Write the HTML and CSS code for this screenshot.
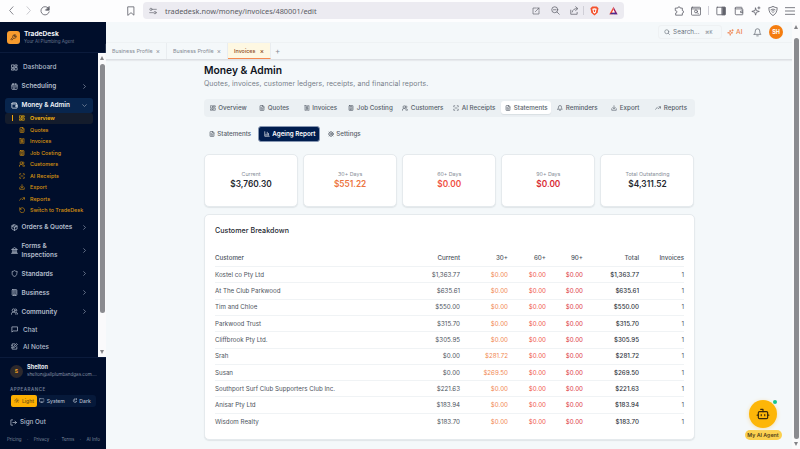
FILE: index.html
```html
<!DOCTYPE html>
<html lang="en">
<head>
<meta charset="utf-8">
<title>TradeDesk</title>
<link rel="stylesheet" href="styles.css">
</head>
<body>
<svg class="defs" aria-hidden="true">
  <symbol id="grid" viewBox="0 0 24 24"><rect x="3" y="3" width="7" height="9"/><rect x="14" y="3" width="7" height="5"/><rect x="14" y="12" width="7" height="9"/><rect x="3" y="16" width="7" height="5"/></symbol>
  <symbol id="cal" viewBox="0 0 24 24"><rect x="3" y="4" width="18" height="18" rx="2"/><path d="M8 2v4M16 2v4M3 10h18M8 14h1M12 14h1M16 14h1M8 18h1M12 18h1"/></symbol>
  <symbol id="wallet" viewBox="0 0 24 24"><path d="M19 7V4a1 1 0 0 0-1-1H5a2 2 0 0 0 0 4h15a1 1 0 0 1 1 1v12a1 1 0 0 1-1 1H5a2 2 0 0 1-2-2V5M21 12h-5v4h5"/></symbol>
  <symbol id="file" viewBox="0 0 24 24"><path d="M14 2H6a2 2 0 0 0-2 2v16a2 2 0 0 0 2 2h12a2 2 0 0 0 2-2V8zM14 2v6h6M8 13h8M8 17h8M8 9h2"/></symbol>
  <symbol id="receipt" viewBox="0 0 24 24"><path d="M4 2v20l2-1 2 1 2-1 2 1 2-1 2 1 2-1 2 1V2l-2 1-2-1-2 1-2-1-2 1-2-1-2 1zM15 8h-5a2 2 0 0 0 0 4h4a2 2 0 0 1 0 4H8M12 6v12"/></symbol>
  <symbol id="calc" viewBox="0 0 24 24"><rect x="4" y="2" width="16" height="20" rx="2"/><path d="M8 6h8M8 11h1M12 11h1M16 11h1M8 15h1M12 15h1M16 15v3M8 18h4"/></symbol>
  <symbol id="users" viewBox="0 0 24 24"><circle cx="9" cy="8" r="5"/><path d="M1 22v-2a7 7 0 0 1 7-6h2a7 7 0 0 1 7 6v2M16 3a5 5 0 0 1 1 9.500M19 15a6 6 0 0 1 4 6"/></symbol>
  <symbol id="scan" viewBox="0 0 24 24"><path d="M3 7V3h4M17 3h4v4M21 17v4h-4M7 21H3v-4M8 12h8"/></symbol>
  <symbol id="down" viewBox="0 0 24 24"><path d="M12 3v12M7 10l5 5 5-5M3 15v6h18v-6"/></symbol>
  <symbol id="trend" viewBox="0 0 24 24"><path d="M2 17l7-7 5 5 8-8M16 7h6v6"/></symbol>
  <symbol id="undo" viewBox="0 0 24 24"><path d="M3 3v6h6M3 9a10 10 0 1 1-.5 6"/></symbol>
  <symbol id="box" viewBox="0 0 24 24"><path d="M12 2l9 5v10l-9 5-9-5V7zM3 7l9 5 9-5M12 12v10M7.500 4.500l9 5"/></symbol>
  <symbol id="bank" viewBox="0 0 24 24"><path d="M2 22h20M4 18h16M6 18v-8M10 18v-8M14 18v-8M18 18v-8M3 8l9-6 9 6z"/></symbol>
  <symbol id="shield" viewBox="0 0 24 24"><path d="M20 13c0 5-3.500 7.500-8 9-4.500-1.500-8-4-8-9V5c3 0 5.500-1 8-3 2.500 2 5 3 8 3z"/></symbol>
  <symbol id="building" viewBox="0 0 24 24"><rect x="4" y="2" width="16" height="20" rx="2"/><path d="M9 22v-4h6v4M8 6h1M12 6h1M16 6h1M8 10h1M12 10h1M16 10h1M8 14h1M12 14h1M16 14h1"/></symbol>
  <symbol id="chat" viewBox="0 0 24 24"><path d="M21 3H3v18l4-4h14z"/></symbol>
  <symbol id="note" viewBox="0 0 24 24"><path d="M13 3H4v18h16v-8M9 15l1-5 9-8 3 3-9 9zM4 8H2M4 16H2"/></symbol>
  <symbol id="chev" viewBox="0 0 24 24"><path d="M8 3l9 9-9 9"/></symbol>
  <symbol id="chevd" viewBox="0 0 24 24"><path d="M3 8l9 9 9-9"/></symbol>
  <symbol id="bell" viewBox="0 0 24 24"><path d="M3 17h18c-2-2-3-4-3-9a6 6 0 0 0-12 0c0 5-1 7-3 9M10 21h4"/></symbol>
  <symbol id="bars" viewBox="0 0 24 24"><path d="M3 3v18h18M8 17v-4M13 17V5M18 17V10"/></symbol>
  <symbol id="gear" viewBox="0 0 24 24"><circle cx="12" cy="12" r="8.500"/><circle cx="12" cy="12" r="3"/><path d="M12 1v3M12 20v3M1 12h3M20 12h3M4 4l2 2M18 18l2 2M20 4l-2 2M6 18l-2 2"/></symbol>
  <symbol id="sun" viewBox="0 0 24 24"><circle cx="12" cy="12" r="4"/><path d="M12 2v2M12 20v2M2 12h2M20 12h2M5 5l1.500 1.500M17.500 17.500L19 19M19 5l-1.500 1.500M6.500 17.500L5 19"/></symbol>
  <symbol id="monitor" viewBox="0 0 24 24"><rect x="2" y="3" width="20" height="14" rx="2"/><path d="M8 21h8M12 17v4"/></symbol>
  <symbol id="moon" viewBox="0 0 24 24"><path d="M11 4a8 8 0 1 0 10 10 7 7 0 0 1-10-10M19 2v6M16 5h6"/></symbol>
  <symbol id="out" viewBox="0 0 24 24"><path d="M9 3H3v18h6M10 12h12M17 7l5 5-5 5"/></symbol>
  <symbol id="search" viewBox="0 0 24 24"><circle cx="11" cy="11" r="8"/><path d="M17 17l5 5"/></symbol>
  <symbol id="zoomout" viewBox="0 0 24 24"><circle cx="10" cy="10" r="8"/><path d="M16 16l6 6M6.500 10h7"/></symbol>
  <symbol id="spark" viewBox="0 0 24 24"><path d="M11 5l2 6 7 2-7 2-2 7-2-7-7-2 7-2zM19 2v5M16.500 4.500h5"/></symbol>
  <symbol id="wrench" viewBox="0 0 24 24"><path d="M14 7l3 3 4-4a6 6 0 0 1-8 8l-7 7-3-3 7-7a6 6 0 0 1 8-8z"/></symbol>
  <symbol id="bot" viewBox="0 0 24 24"><rect x="4" y="8" width="16" height="12" rx="2"/><path d="M12 8V4H8M2 14h2M20 14h2M9 13v2M15 13v2"/></symbol>
  <symbol id="back" viewBox="0 0 24 24"><path d="M16 2L7 12l9 10"/></symbol>
  <symbol id="fwd" viewBox="0 0 24 24"><path d="M8 2l9 10-9 10"/></symbol>
  <symbol id="reload" viewBox="0 0 24 24"><path d="M20 5A10 10 0 1 0 22 14"/><path d="M22 2v8h-8z" fill="currentColor"/></symbol>
  <symbol id="bookmark" viewBox="0 0 24 24"><path d="M5 2h14v20l-7-6-7 6z"/></symbol>
  <symbol id="tune" viewBox="0 0 24 24"><circle cx="6" cy="7" r="3.500"/><path d="M12 7h10M2 17h10"/><circle cx="18" cy="17" r="3.500"/></symbol>
  <symbol id="open" viewBox="0 0 24 24"><path d="M11 3H3v18h18v-8M14 3h7v7M21 3L10 14"/></symbol>
  <symbol id="share" viewBox="0 0 24 24"><path d="M2 11v11h17v-5M6 16c1-6 5-9 13-9M15 2l6 5-6 5"/></symbol>
  <symbol id="puzzle" viewBox="0 0 24 24"><path d="M4 5h5a3 3 0 0 1 6 0h5v6a3 3 0 0 1 0 6v5H4v-5a3 3 0 0 0 0-6z"/></symbol>
  <symbol id="finder" viewBox="0 0 24 24"><rect x="1" y="3" width="22" height="19" rx="2"/><path d="M1 7h22M15 16l3 3"/><circle cx="12" cy="13" r="3.500"/></symbol>
  <symbol id="panel" viewBox="0 0 24 24"><rect x="2" y="3" width="20" height="18" rx="1"/><path d="M15 3h7v18h-7z" fill="currentColor"/></symbol>
  <symbol id="vpn" viewBox="0 0 24 24"><path d="M12 1c3 2 7 3 10 3 0 9-3 15-10 19C5 19 2 13 2 4c3 0 7-1 10-3zM7 9c3-2 7-2 10 0M9 12c2-1 4-1 6 0M12 15v1"/></symbol>
  <symbol id="menu" viewBox="0 0 24 24"><path d="M1 4h22M1 12h22M1 20h22"/></symbol>
</svg>

<div class="browser">
  <svg class="ic b-back"><use href="#back"/></svg>
  <svg class="ic b-fwd"><use href="#fwd"/></svg>
  <svg class="ic b-reload"><use href="#reload"/></svg>
  <svg class="ic b-mark"><use href="#bookmark"/></svg>
  <div class="address">
    <svg class="ic"><use href="#tune"/></svg>
    <span class="url">tradedesk.now/money/invoices/480001/edit</span>
    <svg class="ic"><use href="#open"/></svg>
    <svg class="ic zo"><use href="#zoomout"/></svg>
    <svg class="ic sh"><use href="#share"/></svg>
    <i class="rule"></i>
    <svg class="brave" viewBox="0 0 20 22"><path d="M5 1h10l4 4-2 10-7 6-7-6L1 5z" fill="#f4512c"/><path d="M5 6l5-1 5 1-2 8-3 3-3-3z" fill="#fff"/><path d="M8 8h4l-1 5H9z" fill="#f4512c"/></svg>
    <svg class="bat" viewBox="0 0 22 20"><path d="M11 1L1 19h10z" fill="#ff4724"/><path d="M11 1l10 18h-9z" fill="#9e1f63"/><path d="M1 19h20l-5-4H7z" fill="#4a2d91"/><path d="M11 8l4 7H7z" fill="#fff"/></svg>
  </div>
  <div class="tools">
    <svg class="ic"><use href="#puzzle"/></svg>
    <svg class="ic"><use href="#finder"/></svg>
    <i class="rule"></i>
    <svg class="ic"><use href="#panel"/></svg>
    <svg class="ic"><use href="#wallet"/></svg>
    <svg class="ic"><use href="#spark"/></svg>
    <svg class="ic"><use href="#vpn"/></svg>
    <svg class="ic"><use href="#menu"/></svg>
  </div>
</div>

<div class="app">
  <aside class="side">
    <div class="brand">
      <span class="logo"><svg class="ic"><use href="#wrench"/></svg></span>
      <div><b>TradeDesk</b><small>Your AI Plumbing Agent</small></div>
    </div>
    <div class="navwrap">
      <nav class="nav">
        <a class="row plain"><svg class="ic"><use href="#grid"/></svg><span>Dashboard</span></a>
        <a class="row"><svg class="ic"><use href="#cal"/></svg><span>Scheduling</span><svg class="ic chev"><use href="#chev"/></svg></a>
        <a class="row current"><svg class="ic"><use href="#wallet"/></svg><span>Money &amp; Admin</span><svg class="ic chev"><use href="#chevd"/></svg></a>
        <div class="subnav">
          <a class="on"><svg class="ic"><use href="#grid"/></svg>Overview</a>
          <a><svg class="ic"><use href="#file"/></svg>Quotes</a>
          <a><svg class="ic"><use href="#receipt"/></svg>Invoices</a>
          <a><svg class="ic"><use href="#calc"/></svg>Job Costing</a>
          <a><svg class="ic"><use href="#users"/></svg>Customers</a>
          <a><svg class="ic"><use href="#scan"/></svg>AI Receipts</a>
          <a><svg class="ic"><use href="#down"/></svg>Export</a>
          <a><svg class="ic"><use href="#trend"/></svg>Reports</a>
          <a><svg class="ic"><use href="#undo"/></svg>Switch to TradeDesk</a>
        </div>
        <a class="row"><svg class="ic"><use href="#box"/></svg><span>Orders &amp; Quotes</span><svg class="ic chev"><use href="#chev"/></svg></a>
        <a class="row tall"><svg class="ic"><use href="#bank"/></svg><span>Forms &amp;<br>Inspections</span><svg class="ic chev"><use href="#chev"/></svg></a>
        <a class="row"><svg class="ic"><use href="#shield"/></svg><span>Standards</span><svg class="ic chev"><use href="#chev"/></svg></a>
        <a class="row"><svg class="ic"><use href="#building"/></svg><span>Business</span><svg class="ic chev"><use href="#chev"/></svg></a>
        <a class="row"><svg class="ic"><use href="#users"/></svg><span>Community</span><svg class="ic chev"><use href="#chev"/></svg></a>
        <a class="row plain short"><svg class="ic"><use href="#chat"/></svg><span>Chat</span></a>
        <a class="row plain short"><svg class="ic"><use href="#note"/></svg><span>AI Notes</span></a>
      </nav>
      <div class="sbar"><i class="up"></i><i class="thumb"></i><i class="dn"></i></div>
    </div>
    <div class="foot">
      <div class="user"><span class="ava">S</span><div><b>Shelton</b><small>shelton@allplumbandgas.com....</small></div></div>
      <div class="label">APPEARANCE</div>
      <div class="theme">
        <span class="sel"><svg class="ic"><use href="#sun"/></svg>Light</span>
        <span><svg class="ic"><use href="#monitor"/></svg>System</span>
        <span><svg class="ic"><use href="#moon"/></svg>Dark</span>
      </div>
      <div class="signout"><svg class="ic"><use href="#out"/></svg>Sign Out</div>
      <div class="links"><span>Pricing</span><i>·</i><span>Privacy</span><i>·</i><span>Terms</span><i>·</i><span>AI Info</span></div>
    </div>
  </aside>

  <main class="main">
    <header class="top">
      <div class="search"><svg class="ic"><use href="#search"/></svg><span>Search...</span><kbd>⌘K</kbd></div>
      <div class="ai"><svg class="ic"><use href="#spark"/></svg><span>AI</span></div>
      <svg class="ic bell"><use href="#bell"/></svg>
      <span class="me">SH</span>
    </header>
    <div class="tabs">
      <div class="tab"><span>Business Profile</span><i>×</i></div>
      <div class="tab"><span>Business Profile</span><i>×</i></div>
      <div class="tab active"><span>Invoices</span><i>×</i></div>
      <div class="plus">+</div>
    </div>
    <div class="content">
      <h1>Money &amp; Admin</h1>
      <p class="lead">Quotes, invoices, customer ledgers, receipts, and financial reports.</p>
      <div class="sections">
        <a><svg class="ic"><use href="#grid"/></svg>Overview</a>
        <a><svg class="ic"><use href="#file"/></svg>Quotes</a>
        <a><svg class="ic"><use href="#receipt"/></svg>Invoices</a>
        <a><svg class="ic"><use href="#calc"/></svg>Job Costing</a>
        <a><svg class="ic"><use href="#users"/></svg>Customers</a>
        <a><svg class="ic"><use href="#scan"/></svg>AI Receipts</a>
        <a class="on"><svg class="ic"><use href="#file"/></svg>Statements</a>
        <a><svg class="ic"><use href="#bell"/></svg>Reminders</a>
        <a><svg class="ic"><use href="#down"/></svg>Export</a>
        <a><svg class="ic"><use href="#trend"/></svg>Reports</a>
      </div>
      <div class="views">
        <a><svg class="ic"><use href="#file"/></svg>Statements</a>
        <a class="on"><svg class="ic"><use href="#bars"/></svg>Ageing Report</a>
        <a><svg class="ic"><use href="#gear"/></svg>Settings</a>
      </div>
      <div class="stats">
        <div class="card"><small>Current</small><b>$3,760.30</b></div>
        <div class="card"><small>30+ Days</small><b class="o">$551.22</b></div>
        <div class="card"><small>60+ Days</small><b class="r">$0.00</b></div>
        <div class="card"><small>90+ Days</small><b class="d">$0.00</b></div>
        <div class="card"><small>Total Outstanding</small><b>$4,311.52</b></div>
      </div>
      <section class="card breakdown">
        <h2>Customer Breakdown</h2>
        <table>
          <colgroup><col class="c1"><col class="c2"><col class="c3"><col class="c4"><col class="c5"><col class="c6"><col class="c7"></colgroup>
          <thead><tr><th>Customer</th><th>Current</th><th>30+</th><th>60+</th><th>90+</th><th>Total</th><th>Invoices</th></tr></thead>
          <tbody>
            <tr><td>Kostel co Pty Ltd</td><td>$1,363.77</td><td>$0.00</td><td>$0.00</td><td>$0.00</td><td>$1,363.77</td><td>1</td></tr>
            <tr><td>At The Club Parkwood</td><td>$635.61</td><td>$0.00</td><td>$0.00</td><td>$0.00</td><td>$635.61</td><td>1</td></tr>
            <tr><td>Tim and Chloe</td><td>$550.00</td><td>$0.00</td><td>$0.00</td><td>$0.00</td><td>$550.00</td><td>1</td></tr>
            <tr><td>Parkwood Trust</td><td>$315.70</td><td>$0.00</td><td>$0.00</td><td>$0.00</td><td>$315.70</td><td>1</td></tr>
            <tr><td>Cliffbrook Pty Ltd.</td><td>$305.95</td><td>$0.00</td><td>$0.00</td><td>$0.00</td><td>$305.95</td><td>1</td></tr>
            <tr><td>Srah</td><td>$0.00</td><td>$281.72</td><td>$0.00</td><td>$0.00</td><td>$281.72</td><td>1</td></tr>
            <tr><td>Susan</td><td>$0.00</td><td>$269.50</td><td>$0.00</td><td>$0.00</td><td>$269.50</td><td>1</td></tr>
            <tr><td>Southport Surf Club Supporters Club Inc.</td><td>$221.63</td><td>$0.00</td><td>$0.00</td><td>$0.00</td><td>$221.63</td><td>1</td></tr>
            <tr><td>Anisar Pty Ltd</td><td>$183.94</td><td>$0.00</td><td>$0.00</td><td>$0.00</td><td>$183.94</td><td>1</td></tr>
            <tr><td>Wisdom Realty</td><td>$183.70</td><td>$0.00</td><td>$0.00</td><td>$0.00</td><td>$183.70</td><td>1</td></tr>
          </tbody>
        </table>
      </section>
    </div>
  </main>
  <div class="sbar page"><i class="up"></i><i class="thumb"></i><i class="dn"></i></div>
</div>

<div class="agent"><span class="bubble"><svg class="ic"><use href="#bot"/></svg><i></i></span><span class="tag">My AI Agent</span></div>
</body>
</html>
```

FILE: styles.css
```css
* { box-sizing: border-box; }
body { margin: 0; width: 800px; height: 449px; overflow: hidden; background: #f4f8fa; font-family: Inter, sans-serif; color: #23272f; }
i { font-style: normal; }
small, b { display: block; }
.defs { position: absolute; width: 0; height: 0; }
.ic { width: 7px; height: 7px; flex: none; fill: none; stroke: currentColor; stroke-width: 2.5; stroke-linecap: round; stroke-linejoin: round; }

.browser { display: flex; align-items: center; height: 22px; padding: 0 5px 1px 7px; background: #fdfdfe; color: #62636c; }
.browser .ic { width: 9px; height: 9px; stroke-width: 2; }
.browser .b-fwd { margin-left: 8px; color: #b9bac0; }
.b-reload { margin-left: 7px; }
.browser .b-reload { width: 10px; height: 10px; }
.browser .b-mark { width: 10px; height: 10px; margin-left: 76px; }
.address { display: flex; align-items: center; width: 481px; height: 17px; margin-left: 7px; padding: 0 6px 0 6px; border-radius: 4px; background: #ecebf1; }
.url { width: 369px; margin-left: 8px; font: 7.35px/12px "Noto Sans", sans-serif; color: #5a5b63; }
.address .ic { width: 8px; height: 8px; }
.address .ic.zo { margin-left: 11px; width: 9px; height: 9px; }
.address .ic.sh { margin-left: 10px; width: 9px; height: 9px; }
.rule { width: 1px; height: 9px; background: #cfced6; margin-left: 4px; }
.brave { width: 9px; height: 10px; margin-left: 6px; }
.bat { width: 9px; height: 9px; margin-left: 10px; }
.tools { display: flex; align-items: center; justify-content: space-between; width: 121px; margin-left: auto; }
.tools .ic { width: 10px; height: 10px; }
.tools .rule { margin: 0; }

.app { display: flex; height: 427px; }
.side { display: flex; flex-direction: column; width: 106px; flex: none; background: #000e2b; color: #b3bdcc; }
.brand { display: flex; align-items: center; gap: 4px; height: 31px; padding-left: 7px; border-bottom: 1px solid #0b1b3c; }
.logo { display: grid; place-items: center; width: 13px; height: 13px; border-radius: 3px; background: #f79b2e; color: #3c2a22; }
.brand b { font-size: 6.6px; line-height: 9px; color: #f1f4f8; }
.brand small { font-size: 4.5px; line-height: 6px; color: #69768e; }
.navwrap { display: flex; height: 304px; }
.nav { width: 98px; padding: 5.200px 5px 0; }
.row { display: flex; align-items: center; height: 19px; padding: 0 5px 0 6px; font-size: 6.4px; font-weight: 600; line-height: 8.5px; }
.row span { margin-left: 3.500px; }
.row .ic { width: 7px; height: 7px; }
.row .ic.chev { width: 5px; height: 5px; margin-left: auto; margin-right: 1px; stroke-width: 3.5; color: #8491a6; }
.row.plain { font-weight: 500; }
.row.plain span { margin-left: 5px; }
.row.current { height: 15px; margin-top: 1.400px; border-radius: 3px; background: #08254d; color: #eff3f8; }
.row.tall { height: 27.500px; }
.row.short { height: 17px; }
.subnav { margin-bottom: 1.700px; }
.subnav a { display: flex; align-items: center; gap: 5px; height: 11.500px; padding-left: 14px; font-size: 5.4px; font-weight: 500; color: #d8930f; }
.subnav .ic { width: 6px; height: 6px; }
.subnav a.on { padding-left: 7px; border-radius: 3px; background: #141c2c; color: #fbb90b; font-weight: 600; }
.subnav a.on::before { content: ""; width: 1px; height: 6px; margin-right: 1px; background: #f2a60d; }

.sbar { display: flex; flex-direction: column; align-items: center; justify-content: space-between; width: 8px; background: #fafafb; padding: 3px 0; }
.sbar .up, .sbar .dn { border: 2.500px solid transparent; }
.sbar .up { border-top: 0; border-bottom: 4px solid #828387; }
.sbar .dn { border-bottom: 0; border-top: 4px solid #828387; }
.sbar .thumb { width: 5px; height: 249px; margin-bottom: 33px; border-radius: 3px; background: #8a8b8f; }

.foot { height: 92px; padding: 6px 7px 0; border-top: 1px solid #0b1b3c; }
.user { display: flex; align-items: center; gap: 4px; height: 14px; padding-left: 3px; }
.ava { display: grid; place-items: center; flex: none; width: 13px; height: 13px; border-radius: 50%; background: #2d292d; color: #f0a020; font-size: 5px; font-weight: 700; }
.user b { font-size: 5.6px; line-height: 7px; color: #e9edf3; }
.user small { font-size: 4.55px; line-height: 7px; color: #8390a5; white-space: nowrap; }
.label { margin: 7.500px 0 0 3px; font-size: 4.5px; line-height: 7px; font-weight: 600; letter-spacing: .5px; color: #6f7e96; }
.theme { display: flex; width: 85px; height: 12px; margin: 2px 0 0 4px; border-radius: 3px; background: #06193a; font-size: 5.1px; font-weight: 500; }
.theme span { display: flex; align-items: center; justify-content: center; gap: 2px; width: 30px; }
.theme .ic { width: 5.500px; height: 5.500px; }
.theme .sel { width: 27px; border-radius: 2px; background: #fdb002; color: #705016; }
.signout { display: flex; align-items: center; gap: 3px; height: 10px; margin: 10.500px 0 0 3px; font-size: 6.3px; font-weight: 500; }
.links { display: flex; justify-content: space-between; width: 93px; margin-top: 10px; font-size: 4.4px; line-height: 6px; color: #7c899e; }

.main { flex: 1; min-width: 0; }
.top { display: flex; align-items: center; height: 21px; padding-right: 9px; justify-content: flex-end; border-bottom: 1px solid #eef2f4; }
.search { display: flex; align-items: center; width: 64px; height: 14px; padding: 0 8px 0 5px; border: 1px solid #eef1f3; border-radius: 3px; color: #6b737f; font-size: 6.3px; }
.search .ic { width: 6px; height: 6px; margin-right: 3.500px; }
.search kbd { margin-left: auto; font: 4.5px Inter, "DejaVu Sans", sans-serif; }
.ai { display: flex; align-items: center; gap: 2.500px; margin-left: 5px; color: #ef7f4b; font-size: 6.5px; font-weight: 500; }
.bell { color: #555c67; }
.top .bell { width: 9px; height: 9px; margin-left: 10px; stroke-width: 1.8; }
.sections .bell { color: inherit; }
.me { display: grid; place-items: center; width: 14px; height: 14px; margin-left: 7.500px; border-radius: 50%; background: #f47d10; color: #fff; font-size: 5.5px; font-weight: 700; }
.tabs { display: flex; height: 16.500px; border-bottom: 1px solid #dde0e4; box-shadow: 0 1px 1px #e7eaed; font-size: 5.4px; color: #868c96; white-space: nowrap; }
.tab { display: flex; align-items: center; justify-content: space-between; width: 61px; padding: 0 6px 0 6px; border-right: 1px solid #e9edf0; }
.tab i { font-size: 6.5px; }
.tab.active { width: 43px; padding: 0 6px 0 6px; height: 16px; background: #fef8e2; border-bottom: 1px solid #f58a50; color: #8d4a20; font-weight: 500; }
.plus { padding-left: 4px; font-size: 8px; line-height: 16px; }

.content { width: 490.500px; margin-left: 98px; }
h1 { margin: 4px 0 0; font-size: 10.3px; line-height: 12px; font-weight: 600; color: #0f141d; }
.lead { margin: 3px 0 0; font-size: 6.9px; line-height: 10px; letter-spacing: .1px; color: #767e89; }
.sections { display: grid; grid-template-columns: 49.500px 44.500px 44.500px 54px 51px 52px 52px 54px 44px 42px; align-items: center; height: 17.500px; margin-top: 10.500px; padding-left: 1px; border-radius: 4px; background: #ebf0f3; }
.sections a, .views a { display: flex; align-items: center; gap: 2.800px; height: 13px; padding-left: 4.500px; font-size: 6.25px; font-weight: 500; color: #555d68; white-space: nowrap; }
.sections .ic, .views .ic { width: 6px; height: 6px; }
.sections a.on { width: 50px; border-radius: 3px; background: #fff; box-shadow: 0 1px 1px #d9dfe3; }
.views { display: flex; align-items: center; height: 16px; margin-top: 9.500px; }
.views a:first-child { width: 54px; }
.views a.on { width: 62px; height: 16px; border-radius: 3px; background: #001d4e; border: 1px solid #8797b2; color: #fff; font-weight: 600; }
.views a:last-child { margin-left: 3px; }
.card { border: 1px solid #e5eaed; border-radius: 5px; background: #fff; box-shadow: 0 1px 1px #e0e5e8; }
.stats { display: grid; grid-template-columns: repeat(5, 1fr); gap: 5px; margin-top: 12px; }
.stats .card { height: 52.500px; padding-top: 15px; text-align: center; }
.stats small { font-size: 5.3px; line-height: 9px; color: #868d97; }
.stats b { font-size: 8.3px; line-height: 11px; font-weight: 600; }
.stats .o { color: #ec7440; }
.stats .r { color: #f04f43; }
.stats .d { color: #d92b35; }
.breakdown { height: 226px; margin-top: 7.500px; padding: 10px 10px 0; }
h2 { margin: 0; font-size: 7.1px; line-height: 11px; font-weight: 500; letter-spacing: .05px; }
table { width: 469px; margin-top: 14.800px; border-collapse: separate; border-spacing: 0; table-layout: fixed; font-size: 6.2px; color: #4c535d; }
.c1 { width: 185px; } .c2 { width: 60px; } .c3 { width: 48px; } .c4 { width: 38px; } .c5 { width: 37px; } .c6 { width: 56px; } .c7 { width: 45px; }
th, td { height: 16.300px; padding: 0; text-align: right; font-weight: 400; line-height: 8px; border-bottom: 1px solid #f0f3f5; }
th { font-weight: 500; }
th:first-child, td:first-child { text-align: left; }
tbody tr:last-child td { border-bottom: 0; }
td:nth-child(3) { color: #f18650; }
td:nth-child(4) { color: #f0554a; }
td:nth-child(5) { color: #dc3541; }
td:nth-child(6) { color: #30353d; font-weight: 500; }

.page { width: 8px; margin-left: auto; }
.page .up { margin-top: 0; }
.page .thumb { height: 401px; margin: 5px 0 0; }

.agent { position: absolute; left: 744px; top: 400px; width: 38px; display: flex; flex-direction: column; align-items: center; }
.bubble { position: relative; display: grid; place-items: center; width: 28px; height: 28px; border-radius: 50%; background: #fdb608; color: #3a2a0c; box-shadow: 0 1px 4px #f4dfae; }
.bubble .ic { width: 14px; height: 14px; stroke-width: 2; }
.bubble i { position: absolute; right: 0; top: 0; width: 4px; height: 4px; border-radius: 50%; background: #17c48c; }
.tag { width: 37px; height: 10px; margin-top: 2px; border-radius: 5px; background: #fbd04f; color: #54431a; font-size: 5.3px; line-height: 10px; font-weight: 600; text-align: center; }
```
